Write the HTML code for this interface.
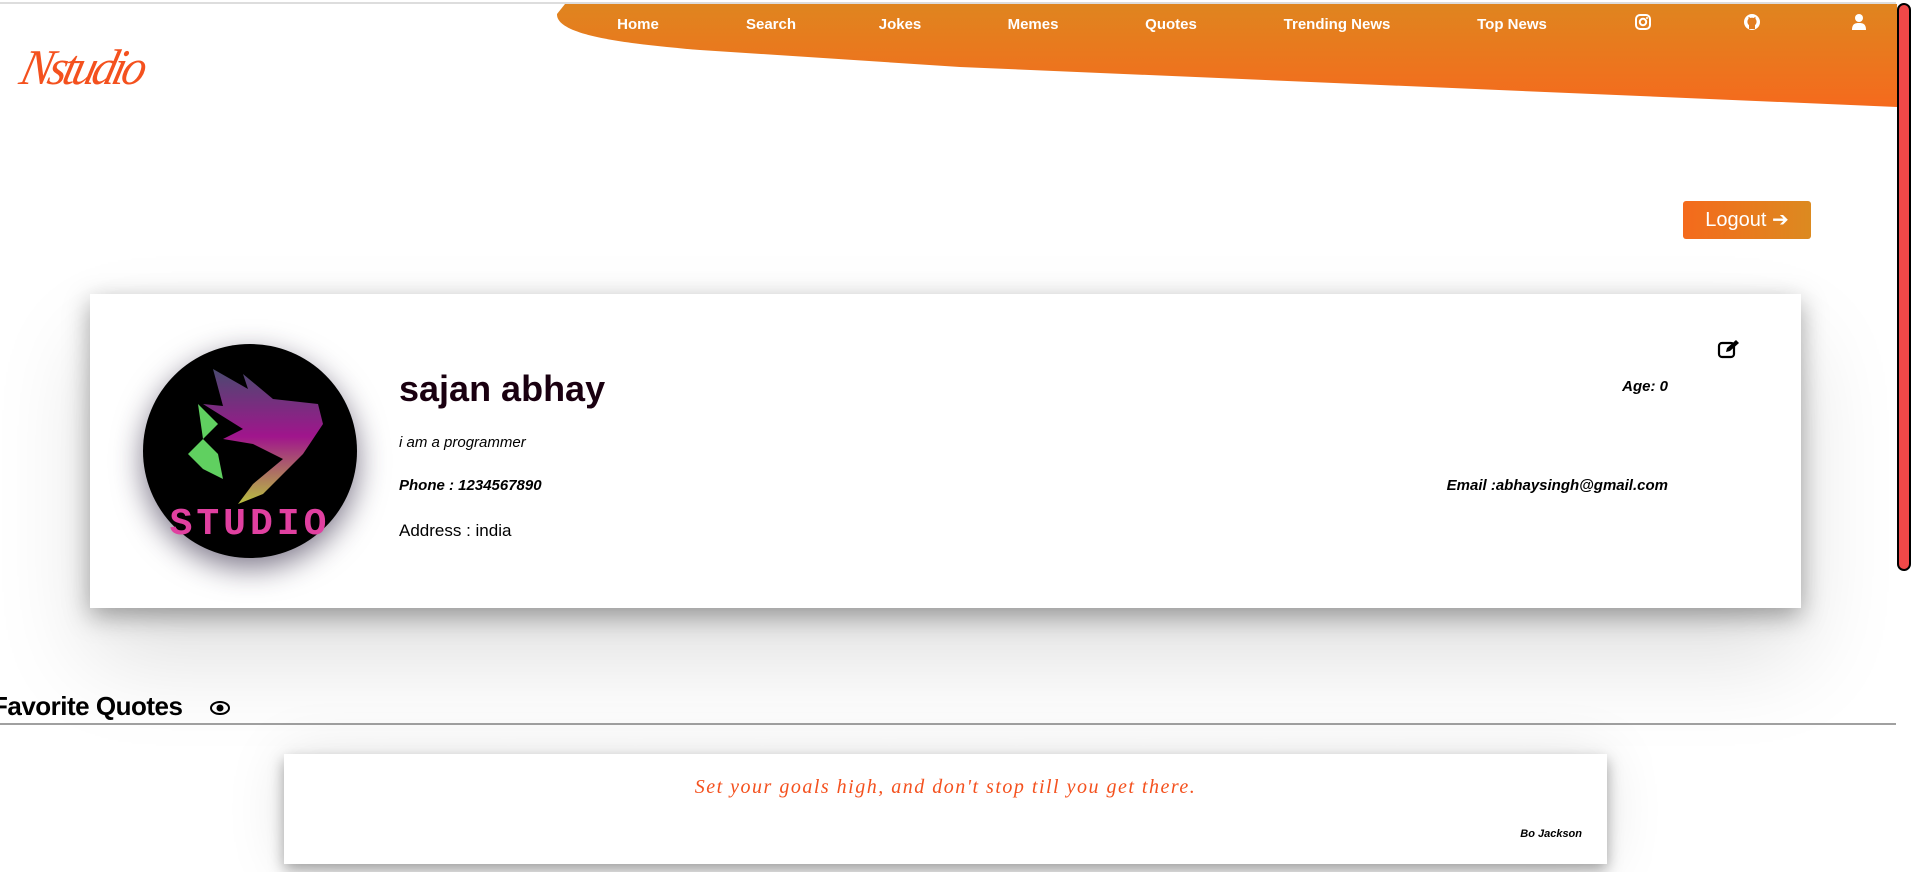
<!DOCTYPE html>
<html><head><meta charset="utf-8"><style>
*{margin:0;padding:0;box-sizing:border-box}
body{width:1912px;height:872px;overflow:hidden;background:#fff;position:relative;font-family:"Liberation Sans",sans-serif}
.abs{position:absolute}
.nav{position:absolute;top:16px;color:#fff;font-size:15px;font-weight:bold;transform:translateX(-50%);white-space:nowrap}
.card{position:absolute;left:90px;top:294px;width:1711px;height:314px;background:#fff;box-shadow:0 8px 24px rgba(0,0,0,.35), 0 50px 90px rgba(0,0,0,.13)}
.comic{font-family:"Liberation Sans",sans-serif;font-style:italic;font-weight:bold;color:#000}
</style></head><body>
<div class="abs" style="left:0;top:2px;width:1896px;height:2px;background:#ddd"></div>
<svg class="abs" style="left:0;top:0" width="1897" height="110">
<defs><linearGradient id="g" x1="0" y1="0" x2="0" y2="1"><stop offset="0" stop-color="#df851f"/><stop offset="1" stop-color="#f56a1d"/></linearGradient></defs>
<path d="M565 4 L1897 4 L1897 107 L960 67 L700 50 C630 44 556 36 557 14 Z" fill="url(#g)"/>
</svg>
<div class="nav" style="left:638px">Home</div>
<div class="nav" style="left:771px">Search</div>
<div class="nav" style="left:900px">Jokes</div>
<div class="nav" style="left:1033px">Memes</div>
<div class="nav" style="left:1171px">Quotes</div>
<div class="nav" style="left:1337px">Trending News</div>
<div class="nav" style="left:1512px">Top News</div>
<svg class="abs" style="left:1634px;top:13px" width="18" height="18" viewBox="0 0 18 18"><rect x="2" y="2" width="14" height="14" rx="4" fill="none" stroke="#fff" stroke-width="2"/><circle cx="9" cy="9" r="3.2" fill="none" stroke="#fff" stroke-width="2"/><circle cx="13" cy="5" r="1" fill="#fff"/></svg>
<svg class="abs" style="left:1743px;top:13px" width="18" height="18" viewBox="0 0 18 18"><circle cx="9" cy="9" r="8" fill="#fff"/><path d="M6 16 L6 12 C4 11 4 7 5.5 6 L5.5 3.8 L7.5 5 C8.5 4.7 9.5 4.7 10.5 5 L12.5 3.8 L12.5 6 C14 7 14 11 12 12 L12 16Z" fill="#e27d1f"/></svg>
<svg class="abs" style="left:1851px;top:13px" width="16" height="18" viewBox="0 0 16 18"><circle cx="8" cy="5" r="4" fill="#fff"/><path d="M1 17 C1 11 4 10 8 10 C12 10 15 11 15 17Z" fill="#fff"/></svg>
<div class="abs" style="left:1897px;top:3px;width:14px;height:568px;border:2px solid #000;border-radius:7px;background:#f04848"></div>
<div class="abs" style="left:22px;top:38px;font-family:'Liberation Serif',serif;font-style:italic;font-size:50px;color:#f4511e;letter-spacing:-4px;transform:skewX(-14deg) scaleX(0.95);transform-origin:left">Nstudio</div>
<div class="abs" style="left:1683px;top:201px;width:128px;height:38px;border-radius:3px;background:linear-gradient(90deg,#f46a1c,#dc8a20);color:#fff;font-size:20px;line-height:38px;text-align:center">Logout &#x2794;</div>
<div class="card"></div>
<div class="abs" style="left:143px;top:344px;width:214px;height:214px;border-radius:50%;background:#000;box-shadow:0 10px 30px rgba(40,30,60,.6)"></div>
<svg class="abs" style="left:143px;top:344px" width="214" height="214">
<defs><linearGradient id="w" x1="0" y1="0" x2="0" y2="1"><stop offset="0" stop-color="#4a4a70"/><stop offset=".5" stop-color="#a0158c"/><stop offset="1" stop-color="#b8c040"/></linearGradient></defs>
<path d="M70 25 L105 45 L100 30 L130 55 L175 60 L180 80 L160 110 L120 150 L95 160 L110 140 L140 115 L110 100 L80 95 L100 85 L60 60 L80 62Z" fill="url(#w)"/>
<path d="M55 60 L75 80 L60 95 L75 110 L80 135 L60 125 L45 110 L60 95 Z" fill="#60d060"/>
<text x="107" y="190" text-anchor="middle" font-family="Liberation Mono" font-weight="bold" font-size="38" fill="#e040a0" letter-spacing="4">STUDIO</text>
</svg>
<div class="abs" style="left:399px;top:368px;font-size:36px;font-weight:bold;color:#1a0010">sajan abhay</div>
<div class="abs" style="left:399px;top:434px;font-size:15px;font-style:italic">i am a programmer</div>
<div class="abs comic" style="left:399px;top:477px;font-size:15px">Phone : 1234567890</div>
<div class="abs" style="left:399px;top:521px;font-size:17px">Address : india</div>
<svg class="abs" style="left:1717px;top:339px" width="24" height="20" viewBox="0 0 24 20"><rect x="2" y="4" width="15" height="14" rx="3" fill="none" stroke="#000" stroke-width="2.2"/><path d="M9 13 L10 9 L19 1 L22 4 L13 12Z" fill="#000"/></svg>
<div class="abs comic" style="right:244px;top:378px;font-size:15px">Age: 0</div>
<div class="abs comic" style="right:244px;top:477px;font-size:15px">Email :abhaysingh@gmail.com</div>
<div class="abs" style="left:-8px;top:691px;font-size:26px;font-weight:bold;color:#000;letter-spacing:-0.5px">Favorite Quotes</div>
<svg class="abs" style="left:210px;top:701px" width="20" height="14" viewBox="0 0 20 14"><ellipse cx="10" cy="7" rx="9" ry="6" fill="none" stroke="#000" stroke-width="2"/><circle cx="10" cy="7" r="3.5" fill="#000"/></svg>
<div class="abs" style="left:0;top:723px;width:1896px;height:2px;background:#a0a0a0"></div>
<div class="abs" style="left:284px;top:754px;width:1323px;height:110px;background:#fff;box-shadow:0 6px 14px rgba(0,0,0,.35),0 0 60px rgba(0,0,0,.1)"></div>
<div class="abs" style="left:284px;top:776px;width:1323px;text-align:center;font-family:'Liberation Serif',serif;font-style:italic;font-size:20px;letter-spacing:1.5px;color:#f4511e">Set your goals high, and don't stop till you get there.</div>
<div class="abs" style="right:330px;top:828px;font-size:11px;font-weight:bold;font-style:italic">Bo Jackson</div>
</body></html>
